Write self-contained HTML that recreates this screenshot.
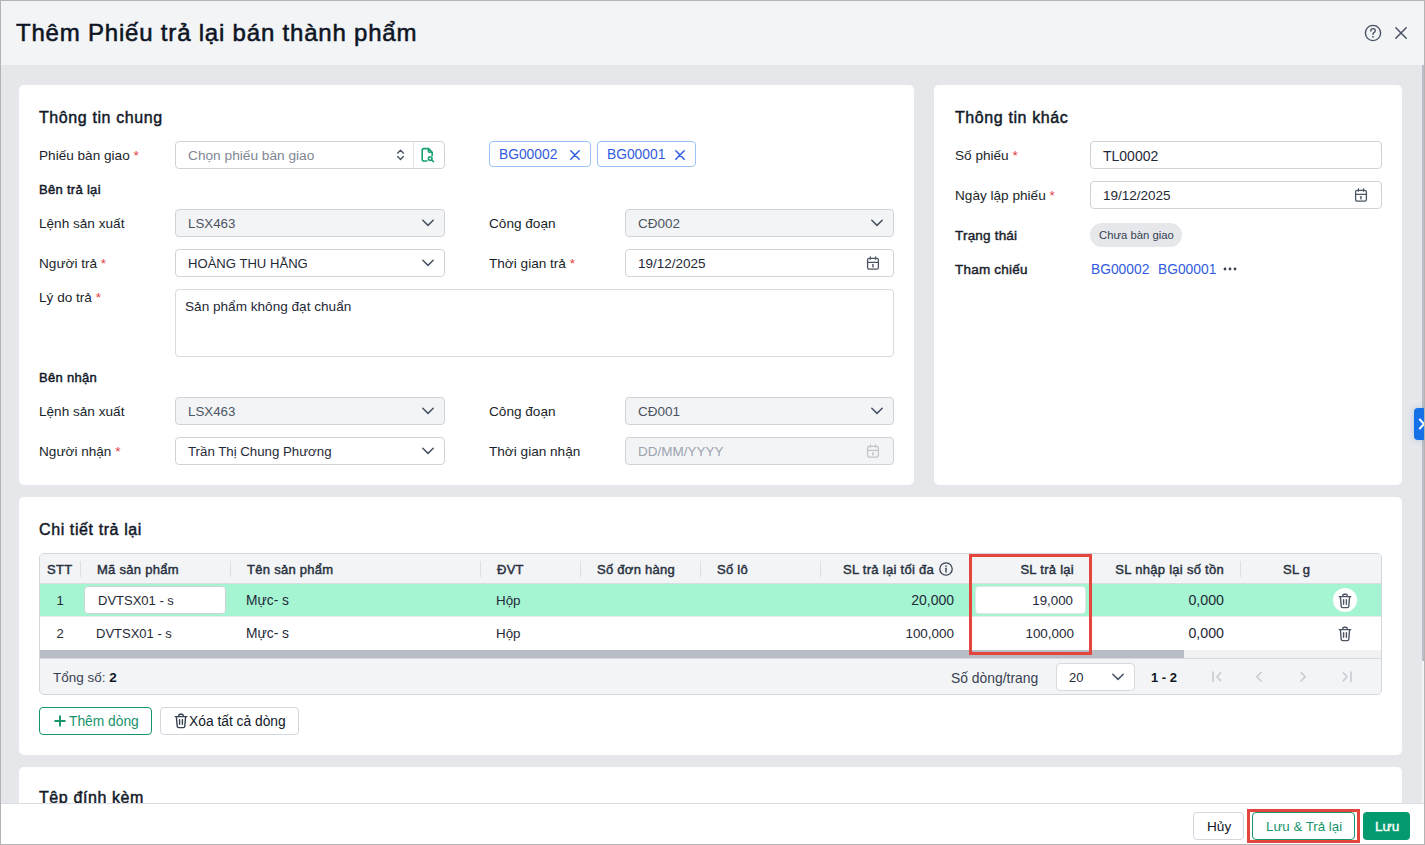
<!DOCTYPE html>
<html><head><meta charset="utf-8">
<style>
*{box-sizing:border-box;margin:0;padding:0}
html,body{width:1425px;height:845px;overflow:hidden;background:#e5e7eb;font-family:"Liberation Sans",sans-serif;color:#111827}
.abs{position:absolute}
.t{position:absolute;white-space:nowrap;line-height:16px}
#frame{position:absolute;left:0;top:0;width:1425px;height:845px;border:1px solid #b4b4b4;pointer-events:none;z-index:50}
#hdr{position:absolute;left:0;top:0;width:1425px;height:65px;background:#f3f4f6}
.card{position:absolute;background:#fff;border-radius:5px}
.lbl{font-size:13.6px;color:#1a1f2b}
.req{color:#e53e3e}
.inp{position:absolute;height:28px;border:1px solid #d0d4da;border-radius:4px;background:#fff}
.inp.dis{background:#f3f4f6}
.val{font-size:13.5px;color:#1f2937}
.dis .val{color:#4b5563}
.sec{font-size:16px;color:#111827;-webkit-text-stroke:0.45px #111827;letter-spacing:0.6px}
.sub{font-size:13px;color:#111827;-webkit-text-stroke:0.45px #111827;letter-spacing:0.3px}
.chip{border:1px solid #9cc3f7;border-radius:4px;background:#fff}
.chip .t{font-size:13.8px;color:#315bdd}
.th{font-size:13px;color:#283140;-webkit-text-stroke:0.45px #283140;letter-spacing:0.28px}
.td{font-size:13px;color:#1f2937}
.chev{position:absolute;width:12px;height:7px}
</style></head><body>
<div id="hdr">
  <div class="t" style="left:16px;top:19px;font-size:24px;line-height:28px;-webkit-text-stroke:0.55px #0d1524;letter-spacing:0.8px;color:#0d1524">Thêm Phiếu trả lại bán thành phẩm</div>
</div>

<!-- Card 1 -->
<div class="card" style="left:19px;top:85px;width:895px;height:400px"></div>

<!-- Card1 content -->
<div class="t sec" style="left:39px;top:109px;line-height:18px">Thông tin chung</div>
<div class="t lbl" style="left:39px;top:148px">Phiếu bàn giao <span class="req">*</span></div>
<div class="inp" style="left:175px;top:141px;width:270px"></div>
<div class="t val" style="left:188px;top:148px;color:#7f8794;font-size:13.7px">Chọn phiếu bàn giao</div>
<div class="t sub" style="left:39px;top:182px">Bên trả lại</div>
<div class="t lbl" style="left:39px;top:216px">Lệnh sản xuất</div>
<div class="inp dis" style="left:175px;top:209px;width:270px"><div class="t val" style="left:12px;top:6px;font-size:13.3px">LSX463</div></div>
<div class="t lbl" style="left:489px;top:216px">Công đoạn</div>
<div class="inp dis" style="left:625px;top:209px;width:269px"><div class="t val" style="left:12px;top:6px">CĐ002</div></div>
<div class="t lbl" style="left:39px;top:256px">Người trả <span class="req">*</span></div>
<div class="inp" style="left:175px;top:249px;width:270px"><div class="t val" style="left:12px;top:6px;font-size:13.1px">HOÀNG THU HẰNG</div></div>
<div class="t lbl" style="left:489px;top:256px">Thời gian trả <span class="req">*</span></div>
<div class="inp" style="left:625px;top:249px;width:269px"><div class="t val" style="left:12px;top:6px">19/12/2025</div></div>
<div class="t lbl" style="left:39px;top:290px">Lý do trả <span class="req">*</span></div>
<div class="inp" style="left:175px;top:289px;width:719px;height:68px;border-color:#d5dbe0"><div class="t val" style="left:9px;top:9px;font-size:13.6px">Sản phẩm không đạt chuẩn</div></div>
<div class="t sub" style="left:39px;top:370px">Bên nhận</div>
<div class="t lbl" style="left:39px;top:404px">Lệnh sản xuất</div>
<div class="inp dis" style="left:175px;top:397px;width:270px"><div class="t val" style="left:12px;top:6px;font-size:13.3px">LSX463</div></div>
<div class="t lbl" style="left:489px;top:404px">Công đoạn</div>
<div class="inp dis" style="left:625px;top:397px;width:269px"><div class="t val" style="left:12px;top:6px">CĐ001</div></div>
<div class="t lbl" style="left:39px;top:444px">Người nhận <span class="req">*</span></div>
<div class="inp" style="left:175px;top:437px;width:270px"><div class="t val" style="left:12px;top:6px;font-size:13.25px">Trần Thị Chung Phương</div></div>
<div class="t lbl" style="left:489px;top:444px">Thời gian nhận</div>
<div class="inp dis" style="left:625px;top:437px;width:269px"><div class="t val" style="left:12px;top:6px;color:#9ca3af">DD/MM/YYYY</div></div>


<!-- card1 icons -->
<svg class="abs" style="left:396px;top:148px" width="10" height="14" viewBox="0 0 10 14"><path d="M1.7 5.1 L4.5 2.3 L7.3 5.1 M1.7 8.6 L4.5 11.4 L7.3 8.6" fill="none" stroke="#4b5563" stroke-width="1.4" stroke-linecap="round" stroke-linejoin="round"/></svg>
<div class="abs" style="left:413px;top:142px;width:1px;height:26px;background:#e3e6ea"></div>
<svg class="abs" style="left:420px;top:147px" width="16" height="16" viewBox="0 0 16 16"><path d="M7 14 H4 Q2.2 14 2.2 12.2 V3 Q2.2 1.6 3.8 1.6 H8.6 L12.2 5.2 V8.4 M8.4 1.8 V4.2 Q8.4 5.2 9.4 5.2 H12" fill="none" stroke="#17a072" stroke-width="1.6" stroke-linecap="round" stroke-linejoin="round"/><circle cx="10.2" cy="11.6" r="1.8" fill="none" stroke="#17a072" stroke-width="1.6"/><path d="M11.6 13 L13.4 14.6" stroke="#17a072" stroke-width="1.6" stroke-linecap="round"/></svg>
<div class="abs chip" style="left:489px;top:141px;width:102px;height:26px"><span class="t" style="left:9px;top:5px">BG00002</span><svg class="abs" style="left:80px;top:8px" width="10" height="10" viewBox="0 0 10 10"><path d="M0.8 0.8 L9.2 9.2 M9.2 0.8 L0.8 9.2" stroke="#2f5fe0" stroke-width="1.5" stroke-linecap="round"/></svg></div>
<div class="abs chip" style="left:597px;top:141px;width:99px;height:26px"><span class="t" style="left:9px;top:5px">BG00001</span><svg class="abs" style="left:77px;top:8px" width="10" height="10" viewBox="0 0 10 10"><path d="M0.8 0.8 L9.2 9.2 M9.2 0.8 L0.8 9.2" stroke="#2f5fe0" stroke-width="1.5" stroke-linecap="round"/></svg></div>
<svg class="abs" style="left:421px;top:218px" width="14" height="9" viewBox="0 0 14 9"><path d="M1.8 2.2 L7 7.4 L12.2 2.2" fill="none" stroke="#465263" stroke-width="1.5" stroke-linecap="round" stroke-linejoin="round"/></svg>
<svg class="abs" style="left:870px;top:218px" width="14" height="9" viewBox="0 0 14 9"><path d="M1.8 2.2 L7 7.4 L12.2 2.2" fill="none" stroke="#465263" stroke-width="1.5" stroke-linecap="round" stroke-linejoin="round"/></svg>
<svg class="abs" style="left:421px;top:258px" width="14" height="9" viewBox="0 0 14 9"><path d="M1.8 2.2 L7 7.4 L12.2 2.2" fill="none" stroke="#465263" stroke-width="1.5" stroke-linecap="round" stroke-linejoin="round"/></svg>
<svg class="abs" style="left:421px;top:406px" width="14" height="9" viewBox="0 0 14 9"><path d="M1.8 2.2 L7 7.4 L12.2 2.2" fill="none" stroke="#465263" stroke-width="1.5" stroke-linecap="round" stroke-linejoin="round"/></svg>
<svg class="abs" style="left:870px;top:406px" width="14" height="9" viewBox="0 0 14 9"><path d="M1.8 2.2 L7 7.4 L12.2 2.2" fill="none" stroke="#465263" stroke-width="1.5" stroke-linecap="round" stroke-linejoin="round"/></svg>
<svg class="abs" style="left:421px;top:446px" width="14" height="9" viewBox="0 0 14 9"><path d="M1.8 2.2 L7 7.4 L12.2 2.2" fill="none" stroke="#465263" stroke-width="1.5" stroke-linecap="round" stroke-linejoin="round"/></svg>
<svg class="abs" style="left:866px;top:255px" width="14" height="16" viewBox="0 0 14 16"><rect x="1.6" y="3.3" width="10.8" height="10.9" rx="1.6" fill="none" stroke="#4b5563" stroke-width="1.3"/><path d="M1.6 7.3 H12.4 M4.4 1.8 V4.2 M9.6 1.8 V4.2 M6.5 9.9 L7 9.7 V12" fill="none" stroke="#4b5563" stroke-width="1.3" stroke-linecap="round"/></svg>
<svg class="abs" style="left:866px;top:443px" width="14" height="16" viewBox="0 0 14 16"><rect x="1.6" y="3.3" width="10.8" height="10.9" rx="1.6" fill="none" stroke="#c1c5cc" stroke-width="1.3"/><path d="M1.6 7.3 H12.4 M4.4 1.8 V4.2 M9.6 1.8 V4.2 M6.5 9.9 L7 9.7 V12" fill="none" stroke="#c1c5cc" stroke-width="1.3" stroke-linecap="round"/></svg>

<!-- Card 2 -->
<div class="card" style="left:934px;top:85px;width:468px;height:400px"></div>

<!-- Card2 content -->
<div class="t sec" style="left:955px;top:109px;line-height:18px">Thông tin khác</div>
<div class="t lbl" style="left:955px;top:148px">Số phiếu <span class="req">*</span></div>
<div class="inp" style="left:1090px;top:141px;width:292px"><div class="t val" style="left:12px;top:6px;font-size:14px">TL00002</div></div>
<div class="t lbl" style="left:955px;top:188px">Ngày lập phiếu <span class="req">*</span></div>
<div class="inp" style="left:1090px;top:181px;width:292px"><div class="t val" style="left:12px;top:6px">19/12/2025</div></div>
<div class="t lbl" style="left:955px;top:228px;font-size:13.5px;-webkit-text-stroke:0.45px #1a1f2b;letter-spacing:0.2px">Trạng thái</div>
<div class="abs" style="left:1090px;top:223px;width:92px;height:24px;border-radius:12px;background:#e5e7eb"></div>
<div class="t" style="left:1099px;top:227px;font-size:11.3px;color:#374151">Chưa bàn giao</div>
<div class="t lbl" style="left:955px;top:262px;font-size:13.5px;-webkit-text-stroke:0.45px #1a1f2b;letter-spacing:0.22px">Tham chiếu</div>
<div class="t" style="left:1091px;top:262px;font-size:13.8px;color:#315bdd">BG00002</div>
<div class="t" style="left:1158px;top:262px;font-size:13.8px;color:#315bdd">BG00001</div>
<svg class="abs" style="left:1222px;top:266px" width="16" height="6" viewBox="0 0 16 6"><circle cx="3" cy="3" r="1.4" fill="#374151"/><circle cx="8" cy="3" r="1.4" fill="#374151"/><circle cx="13" cy="3" r="1.4" fill="#374151"/></svg>
<svg class="abs" style="left:1354px;top:187px" width="14" height="16" viewBox="0 0 14 16"><rect x="1.6" y="3.3" width="10.8" height="10.9" rx="1.6" fill="none" stroke="#4b5563" stroke-width="1.3"/><path d="M1.6 7.3 H12.4 M4.4 1.8 V4.2 M9.6 1.8 V4.2 M6.5 9.9 L7 9.7 V12" fill="none" stroke="#4b5563" stroke-width="1.3" stroke-linecap="round"/></svg>

<!-- Card 3 -->
<div class="card" style="left:19px;top:497px;width:1383px;height:258px"></div>

<!-- Card3 content -->
<div class="t sec" style="left:39px;top:521px;line-height:18px">Chi tiết trả lại</div>
<div class="abs" style="left:39px;top:553px;width:1343px;height:142px;border:1px solid #d3d6dc;border-radius:5px;overflow:hidden;background:#f3f4f6">
  <div class="abs" style="left:0;top:0;width:1341px;height:30px;background:#f3f4f6;border-bottom:1px solid #d9dce1"></div>
  <div class="abs" style="left:0;top:30px;width:1341px;height:33px;background:#a5f5d2;border-bottom:1px solid #e9ecef"></div>
  <div class="abs" style="left:0;top:63px;width:1341px;height:33px;background:#fff"></div>
  <div class="abs" style="left:0;top:96px;width:1341px;height:8px;background:#f1f1f1"></div>
  <div class="abs" style="left:0;top:96px;width:1144px;height:8px;background:#b7bcc5"></div>
  <div class="abs" style="left:0;top:104px;width:1341px;height:1px;background:#d6d9de"></div>
</div>
<div class="abs" style="left:80px;top:561px;width:1px;height:16px;background:#dcdfe4"></div>
<div class="abs" style="left:230px;top:561px;width:1px;height:16px;background:#dcdfe4"></div>
<div class="abs" style="left:480px;top:561px;width:1px;height:16px;background:#dcdfe4"></div>
<div class="abs" style="left:580px;top:561px;width:1px;height:16px;background:#dcdfe4"></div>
<div class="abs" style="left:700px;top:561px;width:1px;height:16px;background:#dcdfe4"></div>
<div class="abs" style="left:820px;top:561px;width:1px;height:16px;background:#dcdfe4"></div>
<div class="abs" style="left:1240px;top:561px;width:1px;height:16px;background:#dcdfe4"></div>
<div class="t th" style="left:47px;top:562px">STT</div>
<div class="t th" style="left:97px;top:562px">Mã sản phẩm</div>
<div class="t th" style="left:247px;top:562px">Tên sản phẩm</div>
<div class="t th" style="left:497px;top:562px">ĐVT</div>
<div class="t th" style="left:597px;top:562px">Số đơn hàng</div>
<div class="t th" style="left:717px;top:562px">Số lô</div>
<div class="t th" style="left:734px;top:562px;width:200px;text-align:right">SL trả lại tối đa</div>
<svg class="abs" style="left:938px;top:561px" width="16" height="16" viewBox="0 0 16 16"><circle cx="8" cy="8" r="6.2" fill="none" stroke="#374151" stroke-width="1.3"/><path d="M8 7.2 V11" stroke="#374151" stroke-width="1.4" stroke-linecap="round"/><circle cx="8" cy="5" r="0.85" fill="#374151"/></svg>
<div class="t th" style="left:874px;top:562px;width:200px;text-align:right">SL trả lại</div>
<div class="t th" style="left:1024px;top:562px;width:200px;text-align:right">SL nhập lại số tồn</div>
<div class="t th" style="left:1283px;top:562px">SL g</div>
<div class="t td" style="left:39px;top:593px;width:42px;text-align:center">1</div>
<div class="inp" style="left:84px;top:586px;width:142px;height:28px;border-color:#cfd3d9"><div class="t td" style="left:13px;top:6px">DVTSX01 - s</div></div>
<div class="t td" style="left:246px;top:593px;font-size:13.8px">Mực- s</div>
<div class="t td" style="left:496px;top:593px;font-size:13.4px">Hộp</div>
<div class="t td" style="left:754px;top:592px;width:200px;text-align:right;font-size:14px">20,000</div>
<div class="inp" style="left:975px;top:586px;width:111px;height:28px;border-color:#e3e6e9"><div class="t td" style="right:12px;top:6px;font-size:13.3px">19,000</div></div>
<div class="t td" style="left:1024px;top:592px;width:200px;text-align:right;font-size:14.2px">0,000</div>
<div class="abs" style="left:1333px;top:588px;width:24px;height:24px;border-radius:12px;background:#fff"></div>
<svg class="abs" style="left:1338px;top:593px" width="14" height="16" viewBox="0 0 14 16"><path d="M1.2 3.6 H12.8 M4.8 3.4 V2.6 Q4.8 1.2 6.2 1.2 H7.8 Q9.2 1.2 9.2 2.6 V3.4 M2.4 3.8 L3.2 13.2 Q3.3 14.6 4.7 14.6 H9.3 Q10.7 14.6 10.8 13.2 L11.6 3.8 M5.6 6.6 V11.2 M8.4 6.6 V11.2" fill="none" stroke="#4b5563" stroke-width="1.4" stroke-linecap="round" stroke-linejoin="round"/></svg>
<div class="t td" style="left:39px;top:626px;width:42px;text-align:center">2</div>
<div class="t td" style="left:96px;top:626px">DVTSX01 - s</div>
<div class="t td" style="left:246px;top:626px;font-size:13.8px">Mực- s</div>
<div class="t td" style="left:496px;top:626px;font-size:13.4px">Hộp</div>
<div class="t td" style="left:754px;top:626px;width:200px;text-align:right;font-size:13.45px">100,000</div>
<div class="t td" style="left:874px;top:626px;width:200px;text-align:right;font-size:13.45px">100,000</div>
<div class="t td" style="left:1024px;top:625px;width:200px;text-align:right;font-size:14.2px">0,000</div>
<svg class="abs" style="left:1338px;top:626px" width="14" height="16" viewBox="0 0 14 16"><path d="M1.2 3.6 H12.8 M4.8 3.4 V2.6 Q4.8 1.2 6.2 1.2 H7.8 Q9.2 1.2 9.2 2.6 V3.4 M2.4 3.8 L3.2 13.2 Q3.3 14.6 4.7 14.6 H9.3 Q10.7 14.6 10.8 13.2 L11.6 3.8 M5.6 6.6 V11.2 M8.4 6.6 V11.2" fill="none" stroke="#4b5563" stroke-width="1.4" stroke-linecap="round" stroke-linejoin="round"/></svg>
<div class="t td" style="left:53px;top:670px;color:#374151;font-size:13.5px">Tổng số: <b style="color:#111827">2</b></div>
<div class="t td" style="left:951px;top:670px;color:#374151;font-size:13.9px">Số dòng/trang</div>
<div class="inp" style="left:1056px;top:663px;width:79px;height:28px;border-color:#d7dadf"><div class="t td" style="left:12px;top:6px">20</div></div>
<svg class="abs" style="left:1111px;top:672px" width="14" height="9" viewBox="0 0 14 9"><path d="M1.8 2.2 L7 7.4 L12.2 2.2" fill="none" stroke="#465263" stroke-width="1.5" stroke-linecap="round" stroke-linejoin="round"/></svg>
<div class="t td" style="left:1151px;top:670px;font-weight:bold;color:#111827">1 - 2</div>
<svg class="abs" style="left:1208px;top:668px" width="60" height="16" viewBox="0 0 60 16"><path d="M5 4 V13.5 M12.6 4.8 L9 8.8 L12.6 12.8" fill="none" stroke="#c5c9d0" stroke-width="1.5" stroke-linecap="round" stroke-linejoin="round"/><path d="M53 4.5 L48.8 8.8 L53 13" fill="none" stroke="#c5c9d0" stroke-width="1.5" stroke-linecap="round" stroke-linejoin="round"/></svg>
<svg class="abs" style="left:1296px;top:668px" width="60" height="16" viewBox="0 0 60 16"><path d="M5 4.5 L9.2 8.8 L5 13" fill="none" stroke="#c5c9d0" stroke-width="1.5" stroke-linecap="round" stroke-linejoin="round"/><path d="M47.4 4.8 L51 8.8 L47.4 12.8 M55 4 V13.5" fill="none" stroke="#c5c9d0" stroke-width="1.5" stroke-linecap="round" stroke-linejoin="round"/></svg>
<div class="abs btn" style="left:39px;top:707px;width:113px;height:28px;border:1px solid #16946b;border-radius:4px"></div>
<svg class="abs" style="left:53px;top:714px" width="14" height="14" viewBox="0 0 14 14"><path d="M7 2.2 V11.8 M2.2 7 H11.8" stroke="#16946b" stroke-width="1.9" stroke-linecap="round"/></svg>
<div class="t" style="left:69px;top:714px;font-size:13.8px;color:#16946b">Thêm dòng</div>
<div class="abs btn" style="left:160px;top:707px;width:139px;height:28px;border:1px solid #d3d6dc;border-radius:4px"></div>
<svg class="abs" style="left:174px;top:713px" width="14" height="16" viewBox="0 0 14 16"><path d="M1.2 3.6 H12.8 M4.8 3.4 V2.6 Q4.8 1.2 6.2 1.2 H7.8 Q9.2 1.2 9.2 2.6 V3.4 M2.4 3.8 L3.2 13.2 Q3.3 14.6 4.7 14.6 H9.3 Q10.7 14.6 10.8 13.2 L11.6 3.8 M5.6 6.6 V11.2 M8.4 6.6 V11.2" fill="none" stroke="#374151" stroke-width="1.4" stroke-linecap="round" stroke-linejoin="round"/></svg>
<div class="t" style="left:189px;top:714px;font-size:13.8px;color:#111827">Xóa tất cả dòng</div>

<!-- Card 4 -->
<div class="card" style="left:19px;top:767px;width:1383px;height:100px"></div>


<!-- Card4 content -->
<div class="t sec" style="left:39px;top:789px;line-height:18px">Tệp đính kèm</div>

<div id="footer" class="abs" style="left:0;top:803px;width:1425px;height:42px;background:#fff;border-top:1px solid #d9dee3"></div>

<div class="abs" style="left:1193px;top:812px;width:51px;height:28px;border:1px solid #d3d6dc;border-radius:4px;background:#fff"></div>
<div class="t" style="left:1207px;top:819px;font-size:13.6px;color:#111827">Hủy</div>
<div class="abs" style="left:1252px;top:812px;width:103px;height:28px;border:1px solid #16946b;border-radius:4px;background:#fff"></div>
<div class="t" style="left:1266px;top:819px;font-size:13.3px;color:#16946b">Lưu &amp; Trả lại</div>
<div class="abs" style="left:1363px;top:812px;width:47px;height:28px;border-radius:4px;background:#049a6f"></div>
<div class="t" style="left:1375px;top:819px;font-size:13.6px;color:#fff;-webkit-text-stroke:0.35px #fff">Lưu</div>
<div class="abs" style="left:1247px;top:809px;width:113px;height:34px;border:3px solid #e4463e"></div>
<div class="abs" style="left:969px;top:554px;width:123px;height:101px;border:3px solid #e4463e"></div>
<!-- header icons -->
<svg class="abs" style="left:1363px;top:23px" width="20" height="20" viewBox="0 0 20 20"><circle cx="10" cy="10" r="7.6" fill="none" stroke="#465263" stroke-width="1.4"/><path d="M7.8 8 Q7.8 5.6 10 5.6 Q12.2 5.6 12.2 7.7 Q12.2 9 10.9 9.6 Q10 10.1 10 11.2" fill="none" stroke="#465263" stroke-width="1.4" stroke-linecap="round"/><circle cx="10" cy="13.8" r="0.9" fill="#465263"/></svg>
<svg class="abs" style="left:1394px;top:26px" width="14" height="14" viewBox="0 0 14 14"><path d="M1.8 1.8 L12.2 12.2 M12.2 1.8 L1.8 12.2" stroke="#465263" stroke-width="1.5" stroke-linecap="round"/></svg>
<!-- page scrollbar -->
<div class="abs" style="left:1422px;top:65px;width:2px;height:596px;background:#b9bdc5"></div>
<div class="abs" style="left:1422px;top:661px;width:2px;height:142px;background:#f4f4f5"></div>
<!-- side tab -->
<div class="abs" style="left:1414px;top:408px;width:10px;height:32px;background:#1670e8;border-radius:4px 0 0 4px;box-shadow:0 0 6px rgba(30,80,200,0.25)"></div>
<svg class="abs" style="left:1418px;top:418px" width="8" height="12" viewBox="0 0 8 12"><path d="M1.8 1.5 L6 6 L1.8 10.5" fill="none" stroke="#fff" stroke-width="1.9" stroke-linecap="round" stroke-linejoin="round"/></svg>
<div id="frame"></div>
</body></html>
